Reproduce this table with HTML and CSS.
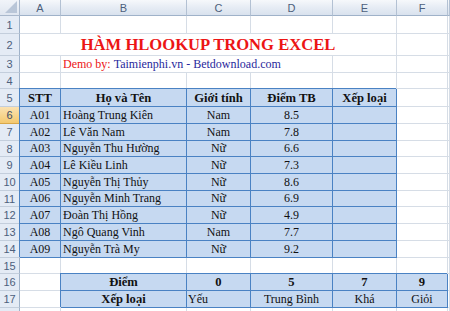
FILE: index.html
```html
<!DOCTYPE html>
<html>
<head>
<meta charset="utf-8">
<link rel="stylesheet" href="styles.css">
</head>
<body>
<div class="sheet">
  <div class="corner"><svg class="tri" width="12" height="12" viewBox="0 0 12 12"><polygon points="12,0 12,12 0,12" fill="#b9c6d8"/></svg></div>
  <div class="ch">A</div><div class="ch">B</div><div class="ch">C</div><div class="ch">D</div><div class="ch">E</div><div class="ch">F</div><div class="ch"></div>

  <div class="rh">1</div><div class="c"></div><div class="c"></div><div class="c"></div><div class="c"></div><div class="c"></div><div class="c"></div><div class="c"></div>

  <div class="rh">2</div><div class="c title span5">HÀM HLOOKUP TRONG EXCEL</div><div class="c"></div><div class="c"></div>

  <div class="rh">3</div><div class="c"></div><div class="c sub span3"><span class="red">Demo by:&nbsp;</span><span class="blue">Taimienphi.vn - Betdownload.com</span></div><div class="c"></div><div class="c"></div><div class="c"></div>

  <div class="rh">4</div><div class="c"></div><div class="c"></div><div class="c"></div><div class="c"></div><div class="c"></div><div class="c"></div><div class="c"></div>

  <div class="rh">5</div><div class="t b ctr">STT</div><div class="t b ctr">Họ và Tên</div><div class="t b ctr">Giới tính</div><div class="t b ctr">Điểm TB</div><div class="t b ctr">Xếp loại</div><div class="c"></div><div class="c"></div>

  <div class="rh sel">6</div><div class="t ctr">A01</div><div class="t lft">Hoàng Trung Kiên</div><div class="t ctr">Nam</div><div class="t ctr">8.5</div><div class="t"></div><div class="c"></div><div class="c"></div>
  <div class="rh">7</div><div class="t ctr">A02</div><div class="t lft">Lê Văn Nam</div><div class="t ctr">Nam</div><div class="t ctr">7.8</div><div class="t"></div><div class="c"></div><div class="c"></div>
  <div class="rh">8</div><div class="t ctr">A03</div><div class="t lft">Nguyễn Thu Hường</div><div class="t ctr">Nữ</div><div class="t ctr">6.6</div><div class="t"></div><div class="c"></div><div class="c"></div>
  <div class="rh">9</div><div class="t ctr">A04</div><div class="t lft">Lê Kiều Linh</div><div class="t ctr">Nữ</div><div class="t ctr">7.3</div><div class="t"></div><div class="c"></div><div class="c"></div>
  <div class="rh">10</div><div class="t ctr">A05</div><div class="t lft">Nguyễn Thị Thủy</div><div class="t ctr">Nữ</div><div class="t ctr">8.6</div><div class="t"></div><div class="c"></div><div class="c"></div>
  <div class="rh">11</div><div class="t ctr">A06</div><div class="t lft">Nguyễn Minh Trang</div><div class="t ctr">Nữ</div><div class="t ctr">6.9</div><div class="t"></div><div class="c"></div><div class="c"></div>
  <div class="rh">12</div><div class="t ctr">A07</div><div class="t lft">Đoàn Thị Hồng</div><div class="t ctr">Nữ</div><div class="t ctr">4.9</div><div class="t"></div><div class="c"></div><div class="c"></div>
  <div class="rh">13</div><div class="t ctr">A08</div><div class="t lft">Ngô Quang Vinh</div><div class="t ctr">Nam</div><div class="t ctr">7.7</div><div class="t"></div><div class="c"></div><div class="c"></div>
  <div class="rh">14</div><div class="t ctr">A09</div><div class="t lft">Nguyễn Trà My</div><div class="t ctr">Nữ</div><div class="t ctr">9.2</div><div class="t"></div><div class="c"></div><div class="c"></div>

  <div class="rh">15</div><div class="c"></div><div class="c"></div><div class="c"></div><div class="c"></div><div class="c"></div><div class="c"></div><div class="c"></div>

  <div class="rh">16</div><div class="c"></div><div class="t b ctr">Điểm</div><div class="t b ctr">0</div><div class="t b ctr">5</div><div class="t b ctr">7</div><div class="t b ctr">9</div><div class="c"></div>
  <div class="rh">17</div><div class="c"></div><div class="t b ctr">Xếp loại</div><div class="t lft tight">Yếu</div><div class="t ctr">Trung Bình</div><div class="t ctr">Khá</div><div class="t ctr">Giỏi</div><div class="c"></div>

  <div class="rh"></div><div class="c"></div><div class="c"></div><div class="c"></div><div class="c"></div><div class="c"></div><div class="c"></div><div class="c"></div>
</div>
</body>
</html>
```
FILE: styles.css
```css
html, body {
  margin: 0;
  padding: 0;
  background: #ffffff;
  overflow: hidden;
}
.sheet {
  display: grid;
  grid-template-columns: 20px 41px 126px 64px 82px 64px 51px 2px;
  grid-template-rows: 16px 18px 22px 17px 16px 18px 17px 17px 16px 17px 17px 16px 17px 17px 17px 16px 17px 17px 17px;
  font-family: "Liberation Serif", "Times New Roman", serif;
  font-size: 12px;
  color: #111111;
}
.sheet > div {
  box-sizing: border-box;
  overflow: hidden;
  white-space: nowrap;
}
.corner {
  background: linear-gradient(#f1f4f9, #dfe6f0);
  border-right: 1px solid #a9b8cc;
  border-bottom: 1px solid #a9b8cc;
  display: flex;
  align-items: flex-end;
  justify-content: flex-end;
  padding: 0 2px 2px 0;
}
.tri { display: block; }
.ch {
  background: linear-gradient(#f6f8fb 0%, #e6ecf4 50%, #d9e2ee 100%);
  border-right: 1px solid #b3c1d3;
  border-bottom: 1px solid #9fb2c9;
  font-family: "Liberation Sans", Arial, sans-serif;
  font-size: 11px;
  color: #4d5f7c;
  display: flex;
  align-items: center;
  justify-content: center;
}
.rh {
  background: #e4ebf5;
  border-right: 1px solid #9fb2c9;
  border-bottom: 1px solid #c3cedc;
  font-family: "Liberation Sans", Arial, sans-serif;
  font-size: 11px;
  color: #4d5f7c;
  display: flex;
  align-items: center;
  justify-content: center;
}
.rh.sel {
  background: linear-gradient(#fbe2b2, #f4c96f);
  border-bottom-color: #d9a84a;
  color: #3e4d66;
}
.c {
  border-right: 1px solid #d6dde6;
  border-bottom: 1px solid #d6dde6;
  display: flex;
  align-items: flex-end;
}
.t {
  background: #c6d9f1;
  border-right: 1px solid #4a82c3;
  border-bottom: 1px solid #4a82c3;
  box-shadow: -1px -1px 0 #4a82c3;
  display: flex;
  align-items: flex-end;
  padding-bottom: 1px;
  line-height: 14px;
}
.b {
  font-weight: bold;
  font-size: 12.6px;
}
.ctr { justify-content: center; }
.lft { justify-content: flex-start; padding-left: 2px; }
.tight { padding-left: 1px; }
.span5 { grid-column: span 5; }
.span3 { grid-column: span 3; }
.title {
  justify-content: center;
  font-weight: bold;
  font-size: 16.6px;
  color: #ec1515;
  line-height: 19px;
  padding-bottom: 1px;
}
.sub {
  justify-content: flex-start;
  padding-left: 2px;
  line-height: 14px;
  padding-bottom: 1px;
}
.red { color: #ec1515; }
.blue { color: #28289c; }
```
